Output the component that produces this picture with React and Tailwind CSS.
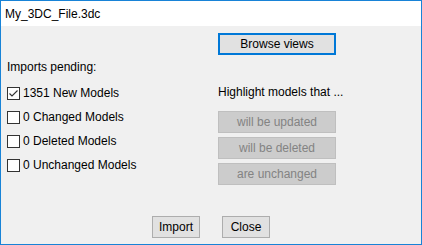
import React from 'react';

const font = { fontFamily: '"Liberation Sans", Arial, sans-serif' };

const CheckRow = ({ label, checked }) => (
  <div className="flex items-center h-[24px] gap-[3px]">
    <div className="w-[13px] h-[13px] border border-[#333333] bg-white flex items-center justify-center">
      {checked && (
        <svg width="11" height="11" viewBox="0 0 11 11">
          <path d="M1.5 5.5 L4 8 L9.5 2.5" fill="none" stroke="#333333" strokeWidth="1.1" />
        </svg>
      )}
    </div>
    <span className="text-[12px] text-black leading-none">{label}</span>
  </div>
);

const DisabledButton = ({ children }) => (
  <div className="w-[118px] h-[22px] bg-[#cccccc] border border-[#bfbfbf] flex items-center justify-center text-[12px] text-[#838383]">
    {children}
  </div>
);

const Button = ({ children }) => (
  <button className="w-[48px] h-[22px] bg-[#e1e1e1] border border-[#adadad] flex items-center justify-center text-[12px] text-black">
    {children}
  </button>
);

export default function App() {
  return (
    <div className="w-[422px] h-[245px] border border-[#1883d7] flex flex-col" style={font}>
      {/* Title bar */}
      <div className="h-[25px] bg-white flex items-center pl-[4px] text-[12px] text-black">
        My_3DC_File.3dc
      </div>

      <div className="flex-1 bg-[#f0f0f0] flex flex-col">
        <div className="pl-[217px] pt-[7px]">
          <button className="w-[118px] h-[22px] bg-[#e1e1e1] border-2 border-[#0078d7] flex items-center justify-center text-[12px] text-black">
            Browse views
          </button>
        </div>

        <div className="pl-[6px] mt-[4px] h-[16px] flex items-center text-[12px] text-black">
          Imports pending:
        </div>

        <div className="flex mt-[6px]">
          <div className="w-[211px] pl-[6px] flex flex-col">
            <CheckRow label="1351 New Models" checked />
            <CheckRow label="0 Changed Models" />
            <CheckRow label="0 Deleted Models" />
            <CheckRow label="0 Unchanged Models" />
          </div>
          <div className="pl-[6px] flex flex-col">
            <div className="h-[22px] flex items-center text-[12px] text-black">Highlight models that ...</div>
            <div className="mt-[8px] flex flex-col gap-[4px]">
              <DisabledButton>will be updated</DisabledButton>
              <DisabledButton>will be deleted</DisabledButton>
              <DisabledButton>are unchanged</DisabledButton>
            </div>
          </div>
        </div>

        <div className="mt-auto pb-[6px] flex justify-center gap-[22px]">
          <Button>Import</Button>
          <Button>Close</Button>
        </div>
      </div>
    </div>
  );
}
